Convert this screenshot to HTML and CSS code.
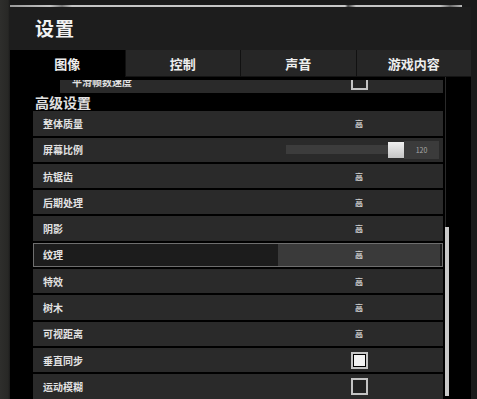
FILE: index.html
```html
<!DOCTYPE html>
<html lang="zh-CN">
<head>
    <meta charset="UTF-8">
    <meta name="viewport" content="width=device-width, initial-scale=1.0">
    <title>设置</title>
    <link rel="stylesheet" href="styles.css">
</head>
<body>

    <div class="panel">
        <div class="topline"></div>

        <!-- Title bar -->
        <div class="header">
            <h1>设置</h1>
        </div>

        <!-- Tabs -->
        <div class="tabs">
            <div class="tab active">图像</div>
            <div class="tab">控制</div>
            <div class="tab">声音</div>
            <div class="tab">游戏内容</div>
        </div>

        <div class="content">
            <div class="list">
                <div class="row sub">
                    <div class="label">平滑帧数速度</div>
                    <div class="value"><span class="check"></span></div>
                </div>

                <h2>高级设置</h2>

                <div class="row"><div class="label">整体质量</div><div class="value">高</div></div>
                <div class="row">
                    <div class="label">屏幕比例</div>
                    <div class="value slider">
                        <span class="track"></span>
                        <span class="thumb"></span>
                        <span class="num">120</span>
                    </div>
                </div>
                <div class="row"><div class="label">抗锯齿</div><div class="value">高</div></div>
                <div class="row"><div class="label">后期处理</div><div class="value">高</div></div>
                <div class="row"><div class="label">阴影</div><div class="value">高</div></div>
                <div class="row selected"><div class="label">纹理</div><div class="value">高</div></div>
                <div class="row"><div class="label">特效</div><div class="value">高</div></div>
                <div class="row"><div class="label">树木</div><div class="value">高</div></div>
                <div class="row"><div class="label">可视距离</div><div class="value">高</div></div>
                <div class="row"><div class="label">垂直同步</div><div class="value"><span class="check on"></span></div></div>
                <div class="row"><div class="label">运动模糊</div><div class="value"><span class="check"></span></div></div>
            </div>

            <!-- Scrollbar -->
            <div class="scrollbar">
                <div class="thumb-bar"></div>
            </div>
        </div>
    </div>

</body>
</html>
```

FILE: styles.css
```css
/* Basic page */
body {
    margin: 0;
    width: 477px;
    height: 399px;
    overflow: hidden;
    font-family: "Noto Sans CJK SC", "Noto Sans", sans-serif;
    color: #e6e6e6;
    background: linear-gradient(to right, #2e2e2c 0, #282826 8px, #1a1a1a 10px);
}
.panel {
    margin-left: 10px;
    width: 461px;
    display: flex;
    flex-direction: column;
}
.topline {
    margin-top: 5px;
    height: 2px;
    width: 452px;
    background: linear-gradient(to right, #9a9a9a 0, #c4c4c4 40px, #777 52px, #c4c4c4 62px, #c8c8c8 335px, #444 338px, #c4c4c4 346px, #c4c4c4 430px, #666 440px, #bbb 452px);
}

/* Title */
.header {
    height: 43px;
    background-color: #1d1d1d;
    padding-left: 25px;
    display: flex;
    align-items: center;
    box-sizing: border-box;
    padding-bottom: 2px;
}
.header h1 {
    margin: 0;
    font-size: 19px;
    font-weight: bold;
    color: #f2f2f2;
    letter-spacing: 1px;
}

/* Tabs */
.tabs {
    display: flex;
    height: 27px;
    background-color: #1d1d1d;
}
.tab {
    flex: 1;
    display: flex;
    align-items: center;
    justify-content: center;
    font-size: 13px;
    font-weight: bold;
    color: #eee;
    background-color: #262626;
    border-left: 1px solid #111;
    border-bottom: 1px solid #141414;
}
.tab.active {
    background-color: #000;
    border: none;
}

/* Settings list */
.content {
    height: 322px;
    background-color: #000;
    display: flex;
    padding-top: 3px;
    box-sizing: border-box;
}
.list {
    width: 410px;
    padding-left: 23px;
    overflow: hidden;
    display: flex;
    flex-direction: column;
}
.list h2 {
    margin: 0 0 1px 2px;
    font-size: 14px;
    line-height: 15px;
    font-weight: bold;
    color: #e0e0e0;
}
.row {
    flex: none;
    height: 24.3px;
    margin-bottom: 2px;
    display: flex;
    align-items: center;
    background-color: #2a2a2a;
    box-sizing: border-box;
}
.row.sub {
    margin-left: 27px;
    margin-top: -11px;
}
.label {
    flex: 1;
    padding-left: 10px;
    font-size: 10px;
    font-weight: bold;
    color: #e2e2e2;
}
.row.sub .label {
    padding-left: 12px;
}
.value {
    width: 162px;
    height: 100%;
    margin-right: 3px;
    display: flex;
    align-items: center;
    justify-content: center;
    font-size: 8px;
    font-weight: bold;
    color: #d0d0d0;
}

/* Selected row */
.row.selected {
    border: 1px solid #6e6e6e;
    background-color: #1c1c1c;
}
.row.selected .label {
    padding-left: 9px;
}
.row.selected .value {
    background-color: #3a3a3a;
    margin-right: 2px;
}

/* Slider */
.value.slider {
    justify-content: flex-start;
    padding-left: 8px;
    box-sizing: border-box;
}
.track {
    width: 102px;
    height: 9px;
    background-color: #3c3c3c;
}
.thumb {
    width: 16px;
    height: 16px;
    background: linear-gradient(#f0f0f0, #c4c4c4);
}
.num {
    width: 35px;
    height: 18px;
    line-height: 18px;
    text-align: center;
    background-color: #3b3b3b;
    color: #a8a8a8;
    font-size: 7px;
    font-weight: normal;
}

/* Checkbox */
.check {
    width: 17px;
    height: 17px;
    box-sizing: border-box;
    border: 2px solid #c4c4c4;
    background-color: #222;
    padding: 1px;
}
.check.on {
    background-color: #000;
}
.check.on::after {
    content: "";
    display: block;
    width: 100%;
    height: 100%;
    background-color: #f2f2f2;
}

/* Scrollbar */
.scrollbar {
    width: 4px;
    margin-left: 2px;
    height: 100%;
    margin-top: -3px;
    background: linear-gradient(to right, #2a2a2a 0, #2a2a2a 1px, transparent 1px);
    padding-top: 150px;
    box-sizing: border-box;
}
.thumb-bar {
    height: 100%;
    background-color: #c8c8c8;
}
```
